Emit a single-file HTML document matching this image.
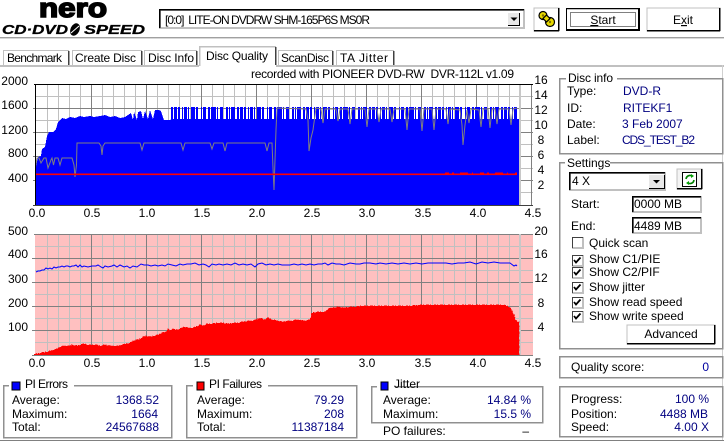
<!DOCTYPE html>
<html><head><meta charset="utf-8"><style>
html,body{margin:0;padding:0;background:#fff;width:724px;height:441px;overflow:hidden}
svg{display:block}
text{font-family:"Liberation Sans","IPAGothic",sans-serif;font-size:12px;fill:#000;white-space:pre}
.v{fill:#000080}.e{text-anchor:end}.m{text-anchor:middle}
.c rect,.c line,.r{shape-rendering:crispEdges}
</style></head><body>
<svg width="724" height="441" viewBox="0 0 724 441" xmlns="http://www.w3.org/2000/svg">
<rect width="724" height="441" fill="#fff"/>
<!-- logo -->
<text x="39" y="17" style="font-size:27px;font-weight:bold;stroke:#000;stroke-width:1.6" textLength="68" lengthAdjust="spacingAndGlyphs">nero</text>
<text x="2" y="34" style="font-size:12.5px;font-weight:bold;font-style:italic;stroke:#000;stroke-width:.3" textLength="66" lengthAdjust="spacingAndGlyphs">CD·DVD</text>
<ellipse cx="75" cy="29.5" rx="4.5" ry="6.5" transform="rotate(25 75 29.5)" fill="#000"/>
<line x1="71" y1="33" x2="79" y2="26" stroke="#fff" stroke-width="1"/>
<text x="84" y="34" style="font-size:12.5px;font-weight:bold;font-style:italic;stroke:#000;stroke-width:.3" textLength="61" lengthAdjust="spacingAndGlyphs">SPEED</text>
<g class="c">
<rect x="0" y="37" width="724" height="1" fill="#a0a0a0"/>
<rect x="0" y="38" width="724" height="1" fill="#d8d8d8"/>
<!-- drive combo -->
<rect x="159" y="9" width="366" height="20" fill="#c0c0c0"/>
<rect x="159" y="9" width="365" height="1.5" fill="#000"/>
<rect x="159" y="9" width="1.5" height="19" fill="#000"/>
<rect x="161" y="11" width="362" height="16" fill="#fff"/>
<rect x="508" y="13" width="12" height="13" fill="#e8e8e8"/>
<rect x="508" y="25" width="12" height="1" fill="#000"/><rect x="519" y="13" width="1" height="13" fill="#000"/>
</g>
<path d="M510.500 17.500h7l-3.500 3.500z" fill="#000"/>
<text x="165" y="24" textLength="205" lengthAdjust="spacing">[0:0]  LITE-ON DVDRW SHM-165P6S MS0R</text>
<!-- icon button -->
<g class="c">
<rect x="534" y="8" width="25" height="23" fill="#fff" stroke="#c0c0c0"/>
<rect x="534" y="30" width="25" height="1.5" fill="#000"/><rect x="558" y="8" width="1.5" height="23" fill="#000"/>
</g>
<g fill="#e6d800" stroke="#000" stroke-width="1.2"><circle cx="543" cy="15.5" r="4"/><circle cx="550" cy="22" r="4.500"/><rect x="544" y="16" width="5" height="5" transform="rotate(45 546.5 18.5)"/></g>
<circle cx="543" cy="15.5" r="1.2" fill="#807000"/><circle cx="550" cy="22" r="1.2" fill="#807000"/>
<!-- start / exit -->
<g class="c">
<rect x="566.5" y="8.5" width="73" height="22" fill="#fff" stroke="#000" stroke-width="1"/>
<rect x="566" y="29" width="74" height="2" fill="#000"/><rect x="638" y="8" width="2" height="23" fill="#000"/>
<rect x="567" y="9" width="71" height="1" fill="#c0c0c0"/>
<rect x="570.5" y="12.5" width="65" height="14" fill="none" stroke="#000" stroke-dasharray="1 1"/>
<rect x="647" y="8" width="73" height="23" fill="#fff" stroke="#c0c0c0"/>
<rect x="647" y="30" width="73" height="1.5" fill="#000"/><rect x="719" y="8" width="1.5" height="23" fill="#000"/>
</g>
<text x="603" y="24" class="m"><tspan text-decoration="underline">S</tspan>tart</text>
<text x="683" y="24" class="m">E<tspan text-decoration="underline">x</tspan>it</text>
<!-- tabs -->
<g class="c" fill="#c0c0c0">
<rect x="0" y="65" width="724" height="2"/>
<rect x="722" y="65" width="1" height="375" fill="#d0d0d0"/>
<rect x="0" y="440" width="724" height="1" fill="#808080"/>
<rect x="3" y="50" width="66" height="1"/><rect x="3" y="50" width="1" height="15"/><rect x="68" y="51" width="1.5" height="14" fill="#404040"/>
<rect x="72" y="50" width="70" height="1"/><rect x="72" y="50" width="1" height="15"/><rect x="141" y="51" width="1.5" height="14" fill="#404040"/>
<rect x="144" y="50" width="53" height="1"/><rect x="144" y="50" width="1" height="15"/><rect x="196" y="51" width="1.5" height="14" fill="#404040"/>
<rect x="278" y="50" width="55" height="1"/><rect x="278" y="50" width="1" height="15"/><rect x="332" y="51" width="1.5" height="14" fill="#404040"/>
<rect x="336" y="50" width="58" height="1"/><rect x="336" y="50" width="1" height="15"/><rect x="393" y="51" width="1.5" height="14" fill="#404040"/>
<rect x="199" y="46" width="77" height="21" fill="#fff"/>
<rect x="199" y="46" width="77" height="1.5"/><rect x="199" y="46" width="1.5" height="20"/><rect x="275" y="47" width="1.5" height="18" fill="#404040"/>
</g>
<text x="7" y="62" textLength="55" lengthAdjust="spacing">Benchmark</text>
<text x="75" y="62" textLength="61" lengthAdjust="spacing">Create Disc</text>
<text x="148" y="62" textLength="46" lengthAdjust="spacing">Disc Info</text>
<text x="206" y="60" textLength="62" lengthAdjust="spacing">Disc Quality</text>
<text x="281" y="62" textLength="48" lengthAdjust="spacing">ScanDisc</text>
<text x="340" y="62" textLength="48" lengthAdjust="spacing">TA Jitter</text>

<text x="251" y="78" textLength="263" lengthAdjust="spacing">recorded with PIONEER DVD-RW  DVR-112L v1.09</text>

<!-- chart 1 -->
<path class="r" stroke="#c0c0c0" stroke-width="1" fill="none" d="M47.5 84V205M58.5 84V205M69.5 84V205M80.5 84V205M102.5 84V205M113.5 84V205M124.5 84V205M135.5 84V205M157.5 84V205M168.5 84V205M179.5 84V205M190.5 84V205M212.5 84V205M223.5 84V205M234.5 84V205M245.5 84V205M267.5 84V205M278.5 84V205M289.5 84V205M300.5 84V205M322.5 84V205M333.5 84V205M344.5 84V205M355.5 84V205M377.5 84V205M388.5 84V205M399.5 84V205M410.5 84V205M432.5 84V205M443.5 84V205M454.5 84V205M465.5 84V205M487.5 84V205M498.5 84V205M509.5 84V205M36 96.5H533M36 120.5H533M36 144.5H533M36 168.5H533M36 192.5H533"/>
<path class="r" stroke="#808080" stroke-width="1" fill="none" d="M91.5 84V205M146.5 84V205M201.5 84V205M256.5 84V205M311.5 84V205M366.5 84V205M421.5 84V205M476.5 84V205M531.5 84V205M33 108.5H533M33 132.5H533M33 156.5H533M33 180.5H533"/>
<path class="r" fill="#0000ff" d="M36 205V166L38 157 41 156 42 149 45 147 47 136 49 132 53 132 56 129 58 122 62 118 66 119 70 117 75 118 80 116 84 117 90 116 94 117 100 116 105 115 110 117 115 116 120 118 125 117 128 115 131 113 133 120 134 112 137 120 138 112 141 111 143 119 145 111 148 119 150 110 153 119 155 110 159 110 161 111 164 120 170 120 171 119H519V205Z"/>
<path stroke="#0000ff" stroke-width="12" fill="none" stroke-dasharray="2 1 3 1 2 2 1 1 3 1 1 2 4 1 2 3 1 1 3 2 2 1 5 1 1 2 3 3 2 1 1 1 4 2" d="M171 113H517"/>
<rect class="r" x="519" y="84" width="2" height="121" fill="#c8c8c8"/>
<path fill="none" stroke="#808080" stroke-width="1" d="M35.5 167 37 158 39 158 41 163 44 158 46 158 48 168 51 160 52 158 53.5 165 55 158 58 158 60 165 62 158 72 158 74 165 75 177 76.5 165 77 143 99 143 101 146 102 155 103 146 105 143 140 143 142 150 144 143 181 143 183 150 185 143 210 143 212 149 214 143 223 143 225 151 227 143 265 143 267 151 269 143 272 143 273 168 274 190 276 130 277 108 306 109 308 120 309 151 311 138 313 130 316 108 321 109 323 123 325 109 336 109 338 121 340 109 348 109 350 124 352 109 365 109 367 127 369 109 377 109 379 122 381 109 390 109 392 122 394 109 405 109 407 130 409 109 420 109 422 131 424 109 432 109 434 130 436 109 446 109 448 124 450 109 460 110 462 125 463 145 465 125 467 110 469 123 471 109 479 110 481 127 483 109 488 109 490 128 492 109 495 109 497 124 499 109 509 109 511 125 513 109 517 108"/>
<path d="M36 174.3H517" stroke="#ff0000" stroke-width="1.6" fill="none"/>
<path class="r" d="M445 173.2H517" stroke="#ff0000" stroke-width="1" stroke-dasharray="4 3 2 6 8 4 1 7" fill="none"/>
<g class="c" fill="#000">
<rect x="34" y="84" width="499" height="1"/><rect x="35" y="84" width="1.2" height="121"/><rect x="33" y="205" width="500" height="1" fill="#404040"/>
</g>
<g>
<text x="28" y="85" class="e">2000</text><text x="28" y="109" class="e">1600</text><text x="28" y="134" class="e">1200</text><text x="28" y="157" class="e">800</text><text x="28" y="182" class="e">400</text>
<text x="541" y="84" class="m">16</text><text x="541" y="99" class="m">14</text><text x="541" y="114" class="m">12</text><text x="541" y="129" class="m">10</text><text x="541" y="144" class="m">8</text><text x="541" y="159" class="m">6</text><text x="541" y="174" class="m">4</text><text x="541" y="189" class="m">2</text>
<text x="37" y="217" class="m">0.0</text><text x="92" y="217" class="m">0.5</text><text x="147" y="217" class="m">1.0</text><text x="202" y="217" class="m">1.5</text><text x="257" y="217" class="m">2.0</text><text x="312" y="217" class="m">2.5</text><text x="367" y="217" class="m">3.0</text><text x="423" y="217" class="m">3.5</text><text x="478" y="217" class="m">4.0</text><text x="533" y="217" class="m">4.5</text>
</g>

<!-- chart 2 -->
<rect class="r" x="35" y="234" width="498" height="121" fill="#ffc0c0"/>
<path class="r" stroke="#c0c0c0" stroke-width="1" fill="none" d="M47.5 234V355M58.5 234V355M69.5 234V355M80.5 234V355M102.5 234V355M113.5 234V355M124.5 234V355M135.5 234V355M157.5 234V355M168.5 234V355M179.5 234V355M190.5 234V355M212.5 234V355M223.5 234V355M234.5 234V355M245.5 234V355M267.5 234V355M278.5 234V355M289.5 234V355M300.5 234V355M322.5 234V355M333.5 234V355M344.5 234V355M355.5 234V355M377.5 234V355M388.5 234V355M399.5 234V355M410.5 234V355M432.5 234V355M443.5 234V355M454.5 234V355M465.5 234V355M487.5 234V355M498.5 234V355M509.5 234V355M35 246.5H533M35 270.5H533M35 294.5H533M35 318.5H533M35 342.5H533"/>
<path class="r" stroke="#808080" stroke-width="1" fill="none" d="M91.5 234V355M146.5 234V355M201.5 234V355M256.5 234V355M311.5 234V355M366.5 234V355M421.5 234V355M476.5 234V355M34 234.5H533M32 258.5H533M32 282.5H533M32 306.5H533M32 330.5H533"/>
<rect class="r" x="519" y="234" width="2" height="121" fill="#c8c8c8"/>
<path fill="#ff0000" stroke="#ff0000" stroke-width="1.2" stroke-dasharray="2 1 1 2 3 1 1 3" class="r" d="M36 355V354L41 353 47 352 50 351 54 350 57 349 60 347 64 346 70 346 72 345 78 346 80 345 84 344 88 345 92 345 96 345 100 346 105 345 110 346 113 346 118 346 122 345 126 344 130 343 133 341 137 340 140 339 143 337 146 336 150 337 154 336 158 335 162 333 166 332 168 329 170 331 172 329 176 330 180 329 184 327 188 328 192 328 196 327 200 325 203 326 207 324 212 324 218 323 222 323 228 324 233 323 238 323 243 322 248 321 252 321 256 320 260 318 264 320 268 318 273 320 278 321 282 322 287 321 292 321 296 320 300 320 304 321 310 320 312 313 320 312 325 312 328 309 332 308 338 307 344 308 350 307 356 307 362 306 372 306 382 306 392 306 402 306 412 306 420 305 432 305 445 305 460 305 480 305 497 305 503 305 507 306 510 308 512 311 514 315 515 319 517 322 519 322V355Z"/>
<path fill="none" stroke="#0000ff" stroke-width="1" d="M36 272 38 271 40 271 42 270 44 270 46 268 48 269 50 268 52 269 54 267 56 268 58 267 60 267 62 266 64 267 66 266 68 266 70 267 72 266 74 266 76 265 78 267 80 265 82 267 84 266 88 267 92 266 96 266 98 265 101 267 103 268 105 266 108 267 112 266 114 265 117 267 120 265 124 267 127 266 130 268 133 266 137 267 141 264 144 265 148 265 151 266 155 265 158 266 162 265 165 266 168 264 172 265 176 266 180 264 183 265 187 264 191 264 195 263 199 265 203 264 206 265 209 267 212 264 216 265 219 264 223 265 227 264 231 265 235 263 239 265 243 264 247 265 251 264 255 267 258 264 262 263 266 265 270 264 274 265 278 264 282 265 286 265 290 265 294 264 298 265 302 264 306 265 310 264 314 265 318 264 322 264 325 263 328 265 332 263 336 264 340 264 344 265 350 263 356 264 360 264 364 263 370 263 376 264 380 263 386 264 392 263 398 264 404 263 410 264 416 263 422 264 428 263 434 263 440 263 446 263 452 264 458 263 464 263 470 262 476 264 482 262 488 263 494 262 500 263 505 263 510 263 514 266 516 265 517 266"/>
<rect class="r" x="34" y="354" width="485" height="1" fill="#ff0000"/>
<rect class="r" x="32" y="355" width="501" height="1" fill="#808080"/>
<g>
<text x="28" y="235" class="e">500</text><text x="28" y="258" class="e">400</text><text x="28" y="283" class="e">300</text><text x="28" y="307" class="e">200</text><text x="28" y="331" class="e">100</text>
<text x="541" y="235" class="m">20</text><text x="541" y="258" class="m">16</text><text x="541" y="282" class="m">12</text><text x="541" y="307" class="m">8</text><text x="541" y="331" class="m">4</text>
<text x="37" y="367" class="m">0.0</text><text x="92" y="367" class="m">0.5</text><text x="147" y="367" class="m">1.0</text><text x="202" y="367" class="m">1.5</text><text x="257" y="367" class="m">2.0</text><text x="312" y="367" class="m">2.5</text><text x="367" y="367" class="m">3.0</text><text x="423" y="367" class="m">3.5</text><text x="478" y="367" class="m">4.0</text><text x="533" y="367" class="m">4.5</text>
</g>

<!-- group boxes -->
<g class="c" fill="none" stroke="#909090" stroke-width="1.5">
<rect x="3.5" y="385.5" width="168" height="52"/>
<rect x="186.5" y="385.5" width="170" height="52"/>
<rect x="371.5" y="386.5" width="171" height="36"/>
<rect x="559.5" y="386.5" width="163" height="50"/>
<rect x="559.5" y="356.5" width="163" height="21"/>
<rect x="559.5" y="78.5" width="163" height="75"/>
<rect x="559.5" y="162.5" width="163" height="186"/>
</g>
<g class="c" fill="#fff">
<rect x="9" y="383" width="65" height="5"/><rect x="193" y="383" width="75" height="5"/><rect x="377" y="383" width="18" height="6"/>
<rect x="566" y="76" width="51" height="5"/><rect x="565" y="160" width="45" height="5"/>
<rect x="12" y="382" width="8" height="8" fill="#0000ff" stroke="#000"/>
<rect x="197" y="382" width="7" height="8" fill="#ff0000" stroke="#000"/>
<rect x="381" y="382" width="7" height="8" fill="#0000ff" stroke="#000"/>
</g>
<text x="25" y="388" textLength="43" lengthAdjust="spacing">PI Errors</text>
<text x="12" y="404">Average:</text><text x="12" y="418">Maximum:</text><text x="12" y="431">Total:</text>
<text x="159" y="404" class="v e">1368.52</text><text x="158" y="418" class="v e">1664</text><text x="159" y="431" class="v e">24567688</text>
<text x="209" y="388" textLength="53" lengthAdjust="spacing">PI Failures</text>
<text x="197" y="404">Average:</text><text x="197" y="418">Maximum:</text><text x="197" y="431">Total:</text>
<text x="344" y="404" class="v e">79.29</text><text x="344" y="418" class="v e">208</text><text x="344" y="431" class="v e">11387184</text>
<text x="394" y="388">Jitter</text>
<text x="383" y="404">Average:</text><text x="383" y="418">Maximum:</text><text x="383" y="435">PO failures:</text>
<text x="531" y="404" class="v e">14.84 %</text><text x="531" y="418" class="v e">15.5 %</text><text x="529" y="435" class="e">–</text>
<text x="571" y="403">Progress:</text><text x="571" y="418">Position:</text><text x="571" y="431">Speed:</text>
<text x="709" y="403" class="v e">100 %</text><text x="708" y="418" class="v e">4488 MB</text><text x="709" y="431" class="v e">4.00 X</text>
<text x="571" y="371">Quality score:</text><text x="709" y="371" class="e" style="fill:#0000a0">0</text>
<text x="568" y="82" textLength="45" lengthAdjust="spacing">Disc info</text>
<text x="567" y="95">Type:</text><text x="567" y="112">ID:</text><text x="567" y="128">Date:</text><text x="567" y="144">Label:</text>
<text x="623" y="95" class="v">DVD-R</text><text x="623" y="112" class="v">RITEKF1</text><text x="622" y="128" class="v">3 Feb 2007</text><text x="622" y="144" class="v" textLength="73" lengthAdjust="spacing">CDS_TEST_B2</text>
<text x="567" y="167">Settings</text>
<!-- speed combo -->
<g class="c">
<rect x="569" y="172" width="97" height="19" fill="#c0c0c0"/>
<rect x="569" y="172" width="96" height="1.5" fill="#000"/><rect x="569" y="172" width="1.5" height="18" fill="#000"/>
<rect x="571" y="174" width="93" height="15" fill="#fff"/>
<rect x="649" y="175" width="15" height="14" fill="#e8e8e8"/>
<rect x="649" y="188" width="15" height="1" fill="#000"/><rect x="664" y="175" width="1" height="14" fill="#000"/>
<rect x="677" y="169" width="25" height="20" fill="#f4f4f4" stroke="#c0c0c0"/>
<rect x="677" y="188" width="25" height="1.5" fill="#000"/><rect x="701" y="169" width="1.5" height="20" fill="#000"/>
<rect x="682.5" y="172.5" width="14" height="14" fill="#fff" stroke="#000"/>
</g>
<path d="M653 180h7l-3.500 3.500z" fill="#000"/>
<text x="572" y="185">4 X</text>
<path d="M686 179a4 4 0 0 1 6-3M694 180a4 4 0 0 1-6 3" fill="none" stroke="#008000" stroke-width="1.6"/>
<path d="M691 174l3 2-3 2zM689 181l-3 2 3 2z" fill="#00a000"/>
<!-- inputs -->
<text x="571" y="208">Start:</text><text x="571" y="230">End:</text>
<g class="c">
<rect x="632" y="196" width="70" height="17" fill="#c0c0c0"/><rect x="632" y="196" width="69" height="1.5" fill="#000"/><rect x="632" y="196" width="1.500" height="16" fill="#000"/><rect x="634" y="198" width="66" height="13" fill="#fff"/>
<rect x="632" y="217" width="70" height="17" fill="#c0c0c0"/><rect x="632" y="217" width="69" height="1.5" fill="#000"/><rect x="632" y="217" width="1.500" height="16" fill="#000"/><rect x="634" y="219" width="66" height="13" fill="#fff"/>
</g>
<text x="634" y="208">0000 MB</text><text x="634" y="230">4489 MB</text>
<!-- checkboxes -->
<g class="c">
<rect x="572" y="237" width="12" height="12" fill="#c0c0c0"/><rect x="572" y="237" width="11" height="1" fill="#404040"/><rect x="572" y="237" width="1" height="11" fill="#404040"/><rect x="573" y="238" width="9" height="9" fill="#fff"/>
<rect x="572" y="255" width="12" height="12" fill="#c0c0c0"/><rect x="572" y="255" width="11" height="1" fill="#404040"/><rect x="572" y="255" width="1" height="11" fill="#404040"/><rect x="573" y="256" width="9" height="9" fill="#fff"/>
<rect x="572" y="267" width="12" height="12" fill="#c0c0c0"/><rect x="572" y="267" width="11" height="1" fill="#404040"/><rect x="572" y="267" width="1" height="11" fill="#404040"/><rect x="573" y="268" width="9" height="9" fill="#fff"/>
<rect x="572" y="282" width="12" height="12" fill="#c0c0c0"/><rect x="572" y="282" width="11" height="1" fill="#404040"/><rect x="572" y="282" width="1" height="11" fill="#404040"/><rect x="573" y="283" width="9" height="9" fill="#fff"/>
<rect x="572" y="297" width="12" height="12" fill="#c0c0c0"/><rect x="572" y="297" width="11" height="1" fill="#404040"/><rect x="572" y="297" width="1" height="11" fill="#404040"/><rect x="573" y="298" width="9" height="9" fill="#fff"/>
<rect x="572" y="311" width="12" height="12" fill="#c0c0c0"/><rect x="572" y="311" width="11" height="1" fill="#404040"/><rect x="572" y="311" width="1" height="11" fill="#404040"/><rect x="573" y="312" width="9" height="9" fill="#fff"/>
</g>
<path fill="none" stroke="#000" stroke-width="1.8" d="M574 260l2 2.500 4.500-5M574 272l2 2.500 4.500-5M574 287l2 2.500 4.500-5M574 302l2 2.500 4.500-5M574 316l2 2.500 4.500-5"/>
<text x="589" y="247">Quick scan</text><text x="589" y="263">Show C1/PIE</text><text x="589" y="276">Show C2/PIF</text><text x="589" y="291">Show jitter</text><text x="589" y="306">Show read speed</text><text x="589" y="320">Show write speed</text>
<!-- advanced -->
<g class="c">
<rect x="627" y="325" width="88" height="19" fill="#fff" stroke="#c0c0c0"/>
<rect x="627" y="343" width="88" height="1.5" fill="#000"/><rect x="714" y="325" width="1.5" height="19" fill="#000"/>
</g>
<text x="671" y="338" class="m">Advanced</text>
</svg>
</body></html>
